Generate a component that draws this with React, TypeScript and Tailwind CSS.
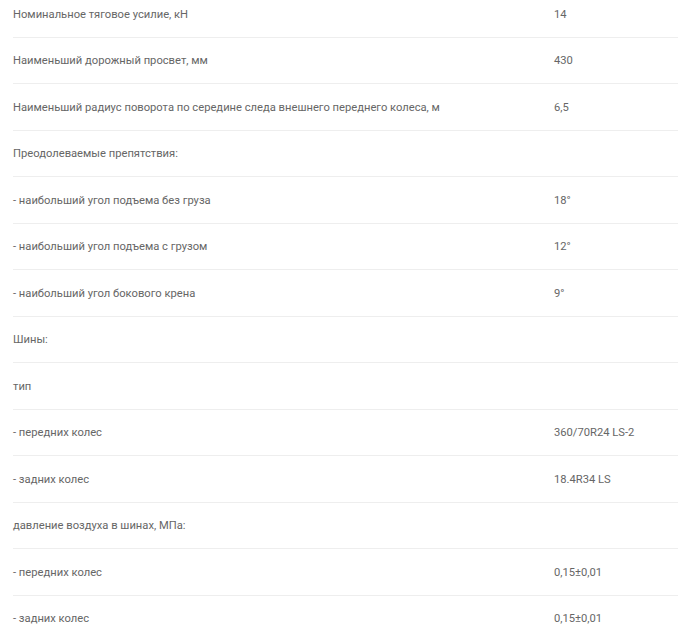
const rows: [string, string][] = [
  ["Номинальное тяговое усилие, кН", "14"],
  ["Наименьший дорожный просвет, мм", "430"],
  ["Наименьший радиус поворота по середине следа внешнего переднего колеса, м", "6,5"],
  ["Преодолеваемые препятствия:", ""],
  ["- наибольший угол подъема без груза", "18°"],
  ["- наибольший угол подъема с грузом", "12°"],
  ["- наибольший угол бокового крена", "9°"],
  ["Шины:", ""],
  ["тип", ""],
  ["- передних колес", "360/70R24 LS-2"],
  ["- задних колес", "18.4R34 LS"],
  ["давление воздуха в шинах, МПа:", ""],
  ["- передних колес", "0,15±0,01"],
  ["- задних колес", "0,15±0,01"],
];

export default function App() {
  return (
    <div className="h-[639px] w-[678px] overflow-hidden bg-white pl-[13px] font-['Roboto',sans-serif] text-[11.2px] text-[#666]">
      <div className="-mt-[9px]">
        {rows.map(([label, value], i) => (
          <div
            key={i}
            className="flex h-[46.5px] items-center border-b border-[#eeeeee] leading-[18px]"
          >
            <div className="w-[541px] pt-[2px]">{label}</div>
            <div className="pt-[2px]">{value}</div>
          </div>
        ))}
      </div>
    </div>
  );
}
